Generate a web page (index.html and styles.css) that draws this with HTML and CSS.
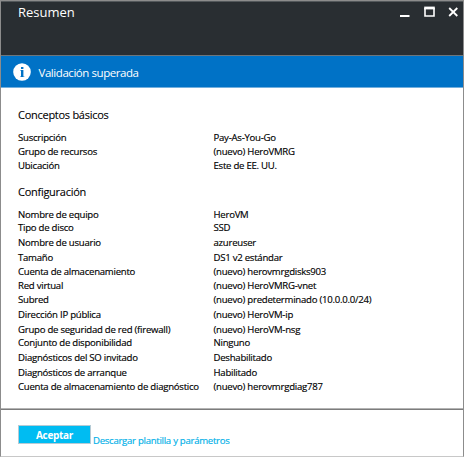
FILE: index.html
```html
<!DOCTYPE html>
<html lang="es">
<head>
<meta charset="utf-8">
<title>Resumen</title>
<link rel="stylesheet" href="styles.css">
</head>
<body>
<main class="blade">
  <header class="header">
    <h1 class="title">Resumen</h1>
    <svg class="controls" width="60" height="12" viewBox="0 0 60 12" fill="none" stroke="#fff">
      <path d="M0 10H9.500" stroke-width="2"/>
      <path d="M25 2V10H34V2" stroke-width="1.600"/>
      <path d="M24.200 2H34.800" stroke-width="2.800"/>
      <path d="M49.200 2L57.300 10M57.300 2L49.200 10" stroke-width="1.800"/>
    </svg>
  </header>
  <div class="banner">
    <svg class="info" width="18" height="18" viewBox="0 0 18 18">
      <circle cx="9" cy="9" r="8.800" fill="#fff"/>
      <path d="M8 4h2.400v2H8zM8 7h2.400v7H8z" fill="#0072c6"/>
      <path d="M7 7h1v1H7zM7 13h4.400v1H7z" fill="#0072c6" opacity=".45"/>
    </svg>
    <span class="banner-text">Validación superada</span>
  </div>
  <section class="content">
    <h2 class="heading">Conceptos básicos</h2>
    <dl class="list basics">
      <dt>Suscripción</dt><dd>Pay-As-You-Go</dd>
      <dt>Grupo de recursos</dt><dd>(nuevo) HeroVMRG</dd>
      <dt>Ubicación</dt><dd>Este de EE. UU.</dd>
    </dl>
    <h2 class="heading">Configuración</h2>
    <dl class="list config">
      <dt>Nombre de equipo</dt><dd>HeroVM</dd>
      <dt>Tipo de disco</dt><dd>SSD</dd>
      <dt>Nombre de usuario</dt><dd>azureuser</dd>
      <dt>Tamaño</dt><dd>DS1 v2 estándar</dd>
      <dt>Cuenta de almacenamiento</dt><dd>(nuevo) herovmrgdisks903</dd>
      <dt>Red virtual</dt><dd>(nuevo) HeroVMRG-vnet</dd>
      <dt>Subred</dt><dd>(nuevo) predeterminado (10.0.0.0/24)</dd>
      <dt>Dirección IP pública</dt><dd>(nuevo) HeroVM-ip</dd>
      <dt>Grupo de seguridad de red (firewall)</dt><dd>(nuevo) HeroVM-nsg</dd>
      <dt>Conjunto de disponibilidad</dt><dd>Ninguno</dd>
      <dt>Diagnósticos del SO invitado</dt><dd>Deshabilitado</dd>
      <dt>Diagnósticos de arranque</dt><dd>Habilitado</dd>
      <dt>Cuenta de almacenamiento de diagnóstico</dt><dd>(nuevo) herovmrgdiag787</dd>
    </dl>
  </section>
  <footer class="footer">
    <button class="accept" type="button">Aceptar</button>
    <a class="download">Descargar plantilla y parámetros</a>
  </footer>
</main>
</body>
</html>
```
FILE: styles.css
```css
* { box-sizing: border-box; margin: 0; padding: 0; }
body {
  font-family: "Open Sans", "Noto Sans", sans-serif;
  background: #fff;
  color: #000;
}
.blade {
  width: 464px;
  height: 457px;
  display: flex;
  flex-direction: column;
  border: 1px solid #8c8c8c;
  border-bottom-color: #c8c8c8;
}
.header {
  height: 55px;
  display: flex;
  justify-content: space-between;
  align-items: flex-start;
  padding: 2px 3px 0 17px;
  background: #292e32;
  border-top: 1px solid #53585b;
  border-bottom: 1px solid #6d767c;
  color: #fff;
}
.title {
  font-size: 13px;
  line-height: 17px;
  font-weight: 400;
}
.controls { margin-top: 2px; }
.banner {
  height: 32px;
  display: flex;
  align-items: center;
  padding-left: 12px;
  gap: 7.500px;
  background: #0072c6;
  border-bottom: 1px solid #73afdd;
  color: #fff;
}
.info { display: block; }
.banner-text {
  margin-top: 3px;
  font-size: 11.500px;
  line-height: 16px;
  letter-spacing: -0.440px;
}
.content {
  flex: 1;
  padding: 20px 0 0 17px;
}
.heading {
  height: 23px;
  font-size: 11px;
  line-height: 14px;
  font-weight: 400;
  letter-spacing: -0.270px;
  -webkit-text-stroke: 0.100px #000;
}
.list {
  display: grid;
  grid-template-columns: 195.500px 1fr;
  font-size: 9.600px;
  line-height: 14px;
  letter-spacing: -0.250px;
  white-space: nowrap;
  -webkit-text-stroke: 0.150px #000;
}
.basics {
  grid-template-rows: repeat(3, 14px);
  margin-bottom: 12px;
}
.config {
  grid-template-rows: 13px 15px 15px 14px 14px 14px 15px 15px 13px 15px 15px 14px 14px;
}
.footer {
  height: 48px;
  display: flex;
  align-items: flex-start;
  gap: 2px;
  padding: 16px 0 0 17px;
  border-top: 1px solid #b4b4b4;
  box-shadow: inset 0 1px #7c7c7c;
}
.accept {
  width: 73px;
  height: 19px;
  border: 1px solid #b5cbd5;
  background: #00bcf2;
  color: #fff;
  font: 700 10px/16px "Open Sans", "Noto Sans", sans-serif;
  letter-spacing: -0.300px;
}
.download {
  margin-top: 9px;
  font-size: 9.600px;
  line-height: 14px;
  letter-spacing: -0.280px;
  color: #00b0e8;
  -webkit-text-stroke: 0.150px #00b0e8;
}
```
